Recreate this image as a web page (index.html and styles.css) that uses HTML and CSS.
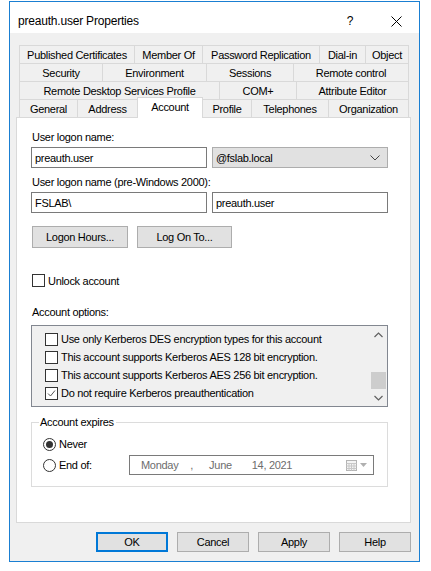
FILE: index.html
```html
<!DOCTYPE html>
<html>
<head>
<meta charset="utf-8">
<link rel="stylesheet" href="styles.css">
</head>
<body>
<div class="window">
  <div class="titlebar">
    <span class="title">preauth.user Properties</span>
    <span class="help">?</span>
    <svg class="close" width="11" height="11" viewBox="0 0 11 11"><path d="M0.5 0.5L10.5 10.5M10.5 0.5L0.5 10.5" stroke="#000" stroke-width="1" fill="none"/></svg>
  </div>
  <div class="client">
    <div class="tabs">
      <div class="tabrow">
        <div class="tab w115">Published Certificates</div>
        <div class="tab w68">Member Of</div>
        <div class="tab w117">Password Replication</div>
        <div class="tab w46">Dial-in</div>
        <div class="tab w44 last">Object</div>
      </div>
      <div class="tabrow">
        <div class="tab w83">Security</div>
        <div class="tab w104">Environment</div>
        <div class="tab w87">Sessions</div>
        <div class="tab w116 last">Remote control</div>
      </div>
      <div class="tabrow">
        <div class="tab w200">Remote Desktop Services Profile</div>
        <div class="tab w77">COM+</div>
        <div class="tab w113 last">Attribute Editor</div>
      </div>
      <div class="tabrow">
        <div class="tab w58">General</div>
        <div class="tab w60">Address</div>
        <div class="tab w65 active">Account</div>
        <div class="tab w49">Profile</div>
        <div class="tab w77">Telephones</div>
        <div class="tab w81 last">Organization</div>
      </div>
    </div>
    <div class="panel">
      <div class="lbl first">User logon name:</div>
      <div class="fieldrow">
        <div class="input">preauth.user</div>
        <div class="combo"><span class="combo-text">@fslab.local</span>
          <svg width="10" height="6" viewBox="0 0 10 6"><path d="M0.5 0.5L5 5L9.5 0.5" stroke="#444" stroke-width="1" fill="none"/></svg>
        </div>
      </div>
      <div class="lbl second">User logon name (pre-Windows 2000):</div>
      <div class="fieldrow">
        <div class="input">FSLAB\</div>
        <div class="input">preauth.user</div>
      </div>
      <div class="btnrow">
        <div class="btn b96">Logon Hours...</div>
        <div class="btn b95">Log On To...</div>
      </div>
      <div class="checkrow unlock">
        <span class="cb"></span><span class="cb-label">Unlock account</span>
      </div>
      <div class="lbl options">Account options:</div>
      <div class="list">
        <div class="items">
          <div class="item"><span class="cb"></span><span class="cb-label">Use only Kerberos DES encryption types for this account</span></div>
          <div class="item"><span class="cb"></span><span class="cb-label">This account supports Kerberos AES 128 bit encryption.</span></div>
          <div class="item"><span class="cb"></span><span class="cb-label">This account supports Kerberos AES 256 bit encryption.</span></div>
          <div class="item"><span class="cb"><svg width="11" height="11" viewBox="0 0 11 11"><path d="M2 5.5L4.5 8L9 2.5" stroke="#555" stroke-width="1" fill="none"/></svg></span><span class="cb-label">Do not require Kerberos preauthentication</span></div>
        </div>
        <div class="scrollbar">
          <div class="sb-btn"><svg width="9" height="6" viewBox="0 0 9 6"><path d="M0.5 5L4.5 1L8.5 5" stroke="#606060" stroke-width="1.2" fill="none"/></svg></div>
          <div class="sb-track"><div class="sb-thumb"></div></div>
          <div class="sb-btn"><svg width="9" height="6" viewBox="0 0 9 6"><path d="M0.5 1L4.5 5L8.5 1" stroke="#606060" stroke-width="1.2" fill="none"/></svg></div>
        </div>
      </div>
      <div class="group">
        <div class="group-title">Account expires</div>
        <div class="radiorow first-radio">
          <span class="radio on"><span class="dot"></span></span><span class="radio-label">Never</span>
        </div>
        <div class="radiorow second-radio">
          <span class="radio"></span><span class="radio-label fixed">End of:</span>
          <div class="datepicker">
            <span class="dp-mon">Monday</span><span class="dp-comma">,</span><span class="dp-june">June</span><span class="dp-day">14, 2021</span>
            <span class="dp-icon">
              <svg width="11" height="11" viewBox="0 0 11 11"><rect x="0.5" y="0.5" width="10" height="10" fill="#f4f4f4" stroke="#b4b4b4"/><path d="M0.5 3.5H10.5M3 3.5V10.5M5.5 3.5V10.5M8 3.5V10.5M0.5 6H10.5M0.5 8.5H10.5" stroke="#c8c8c8" stroke-width="1" fill="none"/></svg>
              <svg width="7" height="4" viewBox="0 0 7 4"><path d="M0 0H7L3.5 4Z" fill="#b0b0b0"/></svg>
            </span>
          </div>
        </div>
      </div>
    </div>
    <div class="buttons">
      <div class="btn dlg default">OK</div>
      <div class="btn dlg">Cancel</div>
      <div class="btn dlg">Apply</div>
      <div class="btn dlg">Help</div>
    </div>
  </div>
</div>
</body>
</html>
```
FILE: styles.css
```css
* { box-sizing: border-box; }
html, body { margin: 0; padding: 0; background: #fff; }
body {
  font-family: "Liberation Sans", Arial, sans-serif;
  font-size: 11px;
  letter-spacing: -0.3px;
  color: #000;
  width: 431px;
  height: 571px;
  overflow: hidden;
}
.window {
  margin: 1px 0 0 9px;
  width: 411px;
  height: 561px;
  border: 1px solid #1a7fd2;
  display: flex;
  flex-direction: column;
}
.titlebar {
  height: 31px;
  flex: none;
  background: #fff;
  display: flex;
  align-items: center;
  padding: 7px 17px 0 8px;
}
.title { flex: 1; font-size: 12px; letter-spacing: -0.2px; }
.help { width: 12px; text-align: center; font-size: 12px; letter-spacing: 0; margin-right: 35px; }
.close { display: block; }
.client {
  flex: 1;
  background: #f0f0f0;
  padding: 12px 8px 8px 6px;
  display: flex;
  flex-direction: column;
}
.tabs { margin-left: 3px; width: 390px; }
.tabrow { display: flex; height: 18px; }
.tab {
  height: 18px;
  border-top: 1px solid #d9d9d9;
  border-left: 1px solid #d9d9d9;
  background: #f0f0f0;
  display: flex;
  align-items: center;
  justify-content: center;
  white-space: nowrap;
  flex: none;
}
.tab.last { border-right: 1px solid #d9d9d9; }
.tab.active {
  background: #fff;
  height: 21px;
  margin-top: -2px;
  padding-bottom: 3px;
  border-right: 1px solid #d9d9d9;
  margin-right: -1px;
  width: 66px;
  position: relative;
  z-index: 1;
}
.w44 { width: 44px; } .w46 { width: 46px; } .w49 { width: 49px; } .w58 { width: 58px; }
.w60 { width: 60px; } .w65 { width: 65px; } .w68 { width: 68px; } .w77 { width: 77px; }
.w81 { width: 81px; } .w83 { width: 83px; } .w87 { width: 87px; } .w104 { width: 104px; }
.w113 { width: 113px; } .w115 { width: 115px; } .w116 { width: 116px; } .w117 { width: 117px; }
.w200 { width: 200px; }

.panel {
  width: 395px;
  height: 406px;
  border: 1px solid #d9d9d9;
  background: #fff;
  padding: 0 0 0 14px;
  flex: none;
}
.lbl { height: 13px; line-height: 13px; padding-left: 1px; }
.lbl.first { margin-top: 13px; }
.lbl.second { margin-top: 8px; }
.lbl.options { margin-top: 19px; }
.fieldrow { display: flex; gap: 5px; margin-top: 3px; }
.input {
  width: 176px;
  height: 21px;
  border: 1px solid #7a7a7a;
  background: #fff;
  padding-left: 3px;
  display: flex;
  align-items: center;
}
.combo {
  width: 176px;
  height: 21px;
  border: 1px solid #adadad;
  background: #e1e1e1;
  padding: 0 7px 0 3px;
  display: flex;
  align-items: center;
}
.combo-text { flex: 1; }
.btnrow { display: flex; gap: 9px; margin-top: 13px; padding-left: 1px; }
.btn {
  height: 22px;
  border: 1px solid #adadad;
  background: #e1e1e1;
  display: flex;
  align-items: center;
  justify-content: center;
}
.b96 { width: 96px; }
.b95 { width: 95px; }
.checkrow { display: flex; align-items: center; height: 13px; }
.unlock { margin-top: 26px; padding-left: 1px; }
.cb {
  width: 13px;
  height: 13px;
  border: 1px solid #333;
  background: #fff;
  display: flex;
  align-items: center;
  justify-content: center;
  flex: none;
}
.cb-label { margin-left: 3px; white-space: nowrap; }
.list {
  margin-top: 6px;
  width: 357px;
  height: 82px;
  border: 1px solid #828790;
  background: #f0f0f0;
  display: flex;
}
.items { flex: 1; padding: 4px 0 0 13px; }
.item { height: 18px; display: flex; align-items: center; }
.scrollbar { width: 17px; display: flex; flex-direction: column; background: #f0f0f0; }
.sb-btn { height: 17px; display: flex; align-items: center; justify-content: center; }
.sb-track { flex: 1; display: flex; align-items: flex-end; justify-content: center; }
.sb-thumb { width: 15px; height: 17px; background: #cdcdcd; }
.group {
  margin-top: 15px;
  width: 357px;
  height: 65px;
  border: 1px solid #dcdcdc;
  padding-left: 11px;
}
.group-title {
  display: block;
  width: fit-content;
  height: 13px;
  line-height: 13px;
  margin-top: -7px;
  margin-left: -4px;
  padding: 0 2px 0 1px;
  background: #fff;
}
.radiorow { display: flex; align-items: center; }
.first-radio { margin-top: 8px; height: 14px; }
.second-radio { margin-top: 4px; height: 20px; }
.radio {
  width: 13px;
  height: 13px;
  border: 1px solid #333;
  border-radius: 50%;
  background: #fff;
  display: flex;
  align-items: center;
  justify-content: center;
  flex: none;
}
.dot { width: 7px; height: 7px; border-radius: 50%; background: #333; }
.radio-label { margin-left: 3px; }
.radio-label.fixed { width: 70px; }
.datepicker {
  width: 245px;
  height: 20px;
  border: 1px solid #7a7a7a;
  background: #fff;
  color: #6d6d6d;
  display: flex;
  align-items: center;
  padding-left: 11px;
  padding-right: 6px;
}
.dp-comma { margin-left: 12px; }
.dp-june { margin-left: 16px; }
.dp-day { margin-left: 20px; flex: 1; }
.dp-icon { display: flex; align-items: center; gap: 3px; }
.dp-icon svg { display: block; }
.buttons {
  display: flex;
  justify-content: flex-end;
  gap: 9px;
  margin-top: 9px;
}
.btn.dlg { width: 72px; height: 20px; }
.btn.default { border: 2px solid #0078d7; }
```
